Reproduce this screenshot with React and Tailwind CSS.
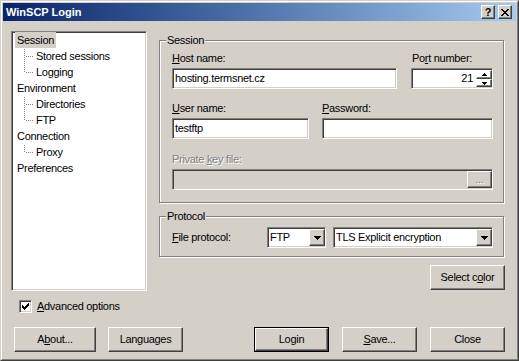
import React from 'react';

const raised =
  'border border-t-white border-l-white border-r-[#404040] border-b-[#404040] shadow-[inset_-1px_-1px_0_#808080]';
const sunken =
  'border border-t-[#808080] border-l-[#808080] border-r-white border-b-white shadow-[inset_1px_1px_0_#404040,inset_-1px_-1px_0_#d4d0c8]';
const etched = 'border border-[#808080] shadow-[inset_1px_1px_0_#fff,1px_1px_0_#fff]';

const DownArrow = () => (
  <svg width="7" height="4" viewBox="0 0 7 4" shapeRendering="crispEdges">
    <path d="M0 0h7v1H0zM1 1h5v1H1zM2 2h3v1H2zM3 3h1v1H3z" fill="#000" />
  </svg>
);

const SmallArrow = ({ up }) => (
  <svg width="5" height="3" viewBox="0 0 5 3" shapeRendering="crispEdges">
    <path
      d={up ? 'M2 0h1v1H2zM1 1h3v1H1zM0 2h5v1H0z' : 'M0 0h5v1H0zM1 1h3v1H1zM2 2h1v1H2z'}
      fill="#000"
    />
  </svg>
);

const Branch = ({ last }) => {
  const dots = [];
  const end = last ? 8 : 16;
  for (let y = 1; y < end; y += 2) dots.push(<rect key={'v' + y} x="0" y={y} width="1" height="1" />);
  for (let x = 2; x < 10; x += 2) dots.push(<rect key={'h' + x} x={x} y="8" width="1" height="1" />);
  return (
    <svg width="12" height="16" className="shrink-0" shapeRendering="crispEdges" fill="#808080">
      {dots}
    </svg>
  );
};

const Btn = ({ className = '', def, children }) => {
  const inner = (
    <div className={`${raised} h-full w-full flex items-center justify-center`}>{children}</div>
  );
  if (def) return <div className={`border border-black h-[25px] ${className}`}>{inner}</div>;
  return <div className={`h-[25px] ${className}`}>{inner}</div>;
};

const Edit = ({ className = '', value, right, disabled, children }) => (
  <div
    className={`${sunken} h-[21px] flex items-center ${disabled ? 'bg-[#d4d0c8]' : 'bg-white'} ${className}`}
  >
    <span className={`flex-1 px-[2px] ${right ? 'text-right pr-[3px]' : ''}`}>{value}</span>
    {children}
  </div>
);

const Combo = ({ className = '', value }) => (
  <div className={`${sunken} h-[21px] flex items-center bg-white ${className}`}>
    <span className="flex-1 pl-[2px]">{value}</span>
    <div className={`${raised} w-[16px] h-[17px] flex items-center justify-center bg-[#d4d0c8]`}>
      <DownArrow />
    </div>
  </div>
);

const Group = ({ title, className = '', children }) => (
  <div className={`relative ${etched} ${className}`}>
    <span className="absolute left-[6px] -top-[7px] bg-[#d4d0c8] px-px">{title}</span>
    {children}
  </div>
);

const tree = [
  { label: 'Session', selected: true },
  { label: 'Stored sessions', child: true },
  { label: 'Logging', child: true, last: true },
  { label: 'Environment' },
  { label: 'Directories', child: true },
  { label: 'FTP', child: true, last: true },
  { label: 'Connection' },
  { label: 'Proxy', child: true, last: true },
  { label: 'Preferences' },
];

export default function App() {
  return (
    <div className="w-[519px] h-[361px] bg-[#d4d0c8] border border-t-[#d4d0c8] border-l-[#d4d0c8] border-r-[#404040] border-b-[#404040] font-['Liberation_Sans',Arial,sans-serif] text-[11px] leading-[13px] tracking-[-0.3px] text-black select-none">
      <div className="h-full w-full border border-t-white border-l-white border-r-[#808080] border-b-[#808080] p-px flex flex-col">
        {/* title bar */}
        <div className="h-[18px] flex items-center bg-gradient-to-r from-[#0a246a] to-[#a6caf0] pl-[3px] pr-[4px]">
          <span className="text-white font-bold tracking-normal flex-1">WinSCP Login</span>
          <div className={`${raised} bg-[#d4d0c8] w-[14px] h-[14px] flex items-center justify-center font-bold text-[11px] leading-none`}>
            ?
          </div>
          <div className={`${raised} bg-[#d4d0c8] w-[14px] h-[14px] ml-[3px] flex items-center justify-center`}>
            <svg width="8" height="7" viewBox="0 0 8 7" shapeRendering="crispEdges">
              <path
                d="M0 0h2v1H0zM6 0h2v1H6zM1 1h2v1H1zM5 1h2v1H5zM2 2h4v1H2zM3 3h2v1H3zM2 4h4v1H2zM1 5h2v1H1zM5 5h2v1H5zM0 6h2v1H0zM6 6h2v1H6z"
                fill="#000"
              />
            </svg>
          </div>
        </div>

        <div className="flex items-start">
          {/* left column */}
          <div className="ml-[8px] mt-[10px] w-[136px]">
            <div className={`${sunken} bg-white h-[260px] w-[136px]`}>
              {tree.map((t) =>
                t.child ? (
                  <div key={t.label} className="h-[16px] flex items-center pl-[12px] leading-[16px]">
                    <Branch last={t.last} />
                    <span>{t.label}</span>
                  </div>
                ) : (
                  <div key={t.label} className="h-[16px] flex items-center pl-[3px] leading-[16px]">
                    <span className={`px-[2px] ${t.selected ? 'bg-[#d4d0c8]' : ''}`}>{t.label}</span>
                  </div>
                )
              )}
            </div>
            <div className="mt-[9px] ml-[8px] flex items-center">
              <div className={`${sunken} bg-white w-[13px] h-[13px] flex items-center justify-center`}>
                <svg width="7" height="7" viewBox="0 0 7 7" shapeRendering="crispEdges">
                  <path
                    d="M6 0h1v3H6zM5 1h1v3H5zM4 2h1v3H4zM0 2h1v3H0zM1 3h1v3H1zM2 4h1v3H2zM3 3h1v3H3z"
                    fill="#000"
                  />
                </svg>
              </div>
              <span className="ml-[5px]">
                <span className="underline">A</span>dvanced options
              </span>
            </div>
          </div>

          {/* right column */}
          <div className="ml-[12px] mt-[19px] w-[345px] flex flex-col">
            <Group title="Session" className="h-[163px] pl-[12px]">
              <div className="mt-[11px] flex">
                <div className="w-[225px]">
                  <div>
                    <span className="underline">H</span>ost name:
                  </div>
                  <Edit className="mt-[3px]" value="hosting.termsnet.cz" />
                </div>
                <div className="ml-[14px] w-[82px]">
                  <div className="pl-px">
                    Po<span className="underline">r</span>t number:
                  </div>
                  <Edit className="mt-[3px]" value="21" right>
                    <div className="flex flex-col h-[17px] w-[16px]">
                      <div className={`${raised} h-[9px] flex items-center justify-center`}>
                        <SmallArrow up />
                      </div>
                      <div className={`${raised} h-[8px] flex items-center justify-center`}>
                        <SmallArrow />
                      </div>
                    </div>
                  </Edit>
                </div>
              </div>

              <div className="mt-[13px] flex">
                <div className="w-[137px]">
                  <div>
                    <span className="underline">U</span>ser name:
                  </div>
                  <Edit className="mt-[3px]" value="testftp" />
                </div>
                <div className="ml-[13px] w-[171px]">
                  <div>
                    <span className="underline">P</span>assword:
                  </div>
                  <Edit className="mt-[3px]" value="" />
                </div>
              </div>

              <div className="mt-[14px] w-[321px]">
                <div className="text-[#808080] [text-shadow:1px_1px_0_#fff]">
                  Private <span className="underline">k</span>ey file:
                </div>
                <Edit className="mt-[3px]" value="" disabled>
                  <div className={`${raised} w-[25px] h-[17px] flex items-center justify-center text-[#808080] [text-shadow:1px_1px_0_#fff]`}>
                    ...
                  </div>
                </Edit>
              </div>
            </Group>

            <Group title="Protocol" className="mt-[13px] h-[41px] pl-[12px]">
              <div className="mt-[10px] flex items-center">
                <span className="w-[95px]">
                  <span className="underline">F</span>ile protocol:
                </span>
                <Combo className="w-[59px]" value="FTP" />
                <Combo className="ml-[7px] w-[160px]" value="TLS Explicit encryption" />
              </div>
            </Group>

            <div className="mt-[8px] flex justify-end -mr-px">
              <Btn className="w-[75px]">
                <span>
                  Select c<span className="underline">o</span>lor
                </span>
              </Btn>
            </div>
          </div>
        </div>

        {/* bottom buttons */}
        <div className="mt-[14px] pl-[11px] flex">
          <Btn className="w-[82px]">
            <span>
              A<span className="underline">b</span>out...
            </span>
          </Btn>
          <Btn className="ml-[12px] w-[75px]">Languages</Btn>
          <Btn def className="ml-[71px] w-[75px]">
            Login
          </Btn>
          <Btn className="ml-[13px] w-[75px]">
            <span>
              <span className="underline">S</span>ave...
            </span>
          </Btn>
          <Btn className="ml-[13px] w-[75px]">Close</Btn>
        </div>
      </div>
    </div>
  );
}
